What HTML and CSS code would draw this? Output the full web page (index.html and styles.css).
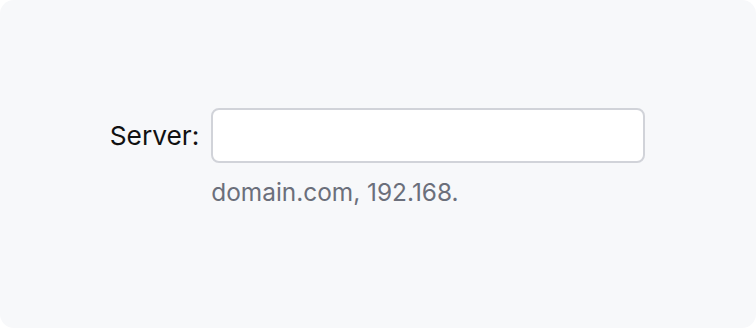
FILE: index.html
```html
<!DOCTYPE html>
<html>
<head>
<meta charset="utf-8">
<link rel="stylesheet" href="styles.css">
</head>
<body>
<div class="frame">
  <div class="field">
    <label class="label" for="server">Server:</label>
    <input class="input" id="server" type="text">
    <div class="hint">domain.com, 192.168.</div>
  </div>
</div>
</body>
</html>
```
FILE: styles.css
```css
html, body {
  margin: 0;
  padding: 0;
  background: #ffffff;
}
.frame {
  width: 756px;
  height: 328px;
  box-sizing: border-box;
  padding-top: 108px;
  background: #f7f8fa;
  border-radius: 14px;
  display: flex;
  align-items: flex-start;
  justify-content: center;
  font-family: Inter, "Noto Sans", sans-serif;
}
.field {
  display: grid;
  grid-template-columns: auto 434px;
  column-gap: 12px;
  row-gap: 14px;
  align-items: center;
  margin-left: -1px;
}
.label {
  font-size: 26.3px;
  color: #111111;
}
.input {
  box-sizing: border-box;
  width: 434px;
  height: 55px;
  border: 2px solid #d1d3d9;
  border-radius: 8px;
  background: #ffffff;
  outline: none;
  font: inherit;
}
.hint {
  grid-column: 2;
  font-size: 24.4px;
  color: #6b6f7b;
}
```
